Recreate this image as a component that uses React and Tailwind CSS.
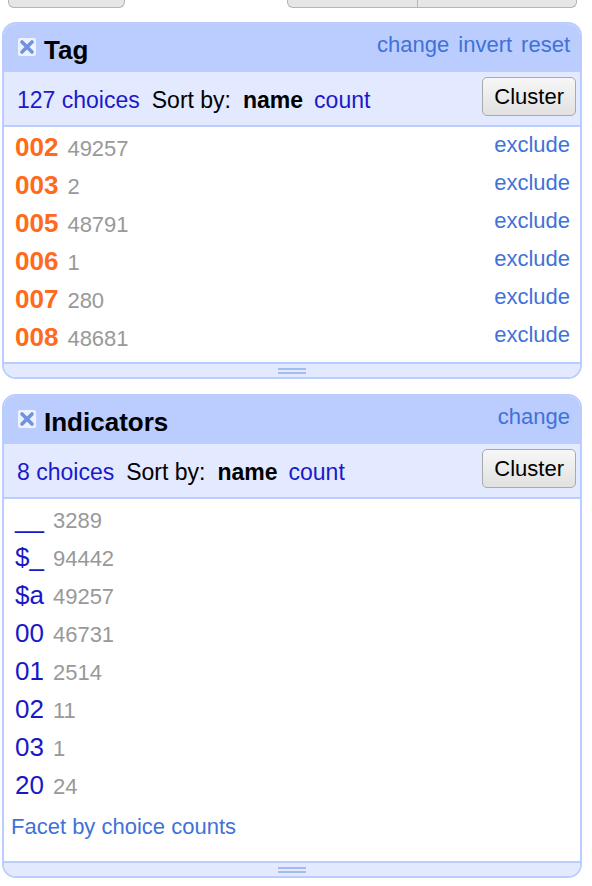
import React from 'react'

const font = "font-['Liberation_Sans',Arial,Helvetica,sans-serif]"

const tagChoices = [
  ['002', '49257'],
  ['003', '2'],
  ['005', '48791'],
  ['006', '1'],
  ['007', '280'],
  ['008', '48681'],
]

const indicatorChoices = [
  ['__', '3289'],
  ['$_', '94442'],
  ['$a', '49257'],
  ['00', '46731'],
  ['01', '2514'],
  ['02', '11'],
  ['03', '1'],
  ['20', '24'],
]

function CloseIcon() {
  return (
    <svg width="20" height="20" viewBox="0 0 20 20" className="shrink-0 mt-[2px]">
      <rect x="1" y="1" width="18" height="18" rx="2" fill="#eef2ff" />
      <path d="M5 5 L15 15 M15 5 L5 15" stroke="#6f93de" strokeWidth="3.6" strokeLinecap="round" />
    </svg>
  )
}

function Grip() {
  return (
    <div className="h-[15px] bg-[#e3e9ff] border-t-2 border-[#bbccff] flex flex-col items-center gap-[2px] pt-[4px]">
      <div className="w-[28px] h-[2px] bg-[#a4bdf0]" />
      <div className="w-[28px] h-[2px] bg-[#a4bdf0]" />
    </div>
  )
}

function FacetHeader({ title, links, count }) {
  return (
    <>
      <div className="h-[48px] bg-[#bbccff] flex justify-between items-start pl-[13px] pr-[10px]">
        <div className="flex items-start gap-[7px] pt-[11px]">
          <CloseIcon />
          <span className="text-[26px] leading-[30px] font-bold text-black">{title}</span>
        </div>
        <div className="flex gap-[9px] pt-[6px] text-[22px] leading-[30px] text-[#3f72d8]">
          {links.map(l => <span key={l}>{l}</span>)}
        </div>
      </div>
      <div className="h-[55px] bg-[#e3e9ff] border-b-2 border-[#bbccff] flex justify-between items-start pl-[13px] pr-[4px]">
        <div className="pt-[13px] text-[23px] leading-[30px] text-black whitespace-pre">
          <span className="text-[#1a1acc]">{count} choices</span>
          <span className="ml-[12px]">Sort by:</span>
          <span className="ml-[12px] font-bold">name</span>
          <span className="ml-[11px] text-[#1a1acc]">count</span>
        </div>
        <button className="mt-[5px] h-[39px] px-[11px] rounded-[5px] border border-[#a9a9a9] bg-gradient-to-b from-[#f7f7f7] to-[#e1e1e1] text-[22px] text-black leading-none">
          Cluster
        </button>
      </div>
    </>
  )
}

export default function App() {
  return (
    <div className={`${font} w-[592px] h-[886px] bg-white overflow-hidden`}>
      <div className="h-[22px] flex items-start">
        <div className="ml-[8px] w-[117px] h-[8px] border border-t-0 border-[#b5b5b5] rounded-b-[6px] bg-[#e6e6e6]" />
        <div className="ml-[162px] flex">
          <div className="w-[131px] h-[8px] border border-t-0 border-[#b5b5b5] rounded-bl-[6px] bg-[#e6e6e6]" />
          <div className="w-[159px] h-[8px] border border-t-0 border-l-0 border-[#b5b5b5] rounded-br-[6px] bg-[#e6e6e6]" />
        </div>
      </div>

      <div className="ml-[2px] w-[580px] border-2 border-[#bbccff] rounded-[14px] overflow-hidden">
        <FacetHeader title="Tag" links={['change', 'invert', 'reset']} count={127} />
        <div className="bg-white pt-[1px] pb-[6px] pl-[11px] pr-[10px]">
          {tagChoices.map(([name, n]) => (
            <div key={name} className="h-[38px] leading-[38px] text-[22px]">
              <span className="float-right leading-[34px] text-[#3f72d8]">exclude</span>
              <span className="text-[26px] font-bold text-[#ff6a1c]">{name}</span>
              <span className="ml-[9px] text-[#999999]">{n}</span>
            </div>
          ))}
        </div>
        <Grip />
      </div>

      <div className="mt-[15px] ml-[2px] w-[580px] border-2 border-[#bbccff] rounded-[14px] overflow-hidden">
        <FacetHeader title="Indicators" links={['change']} count={8} />
        <div className="bg-white pt-[1px] pb-[15px] pl-[11px] pr-[10px]">
          {indicatorChoices.map(([name, n]) => (
            <div key={name} className="h-[38px] leading-[38px] text-[22px]">
              <span className="text-[26px] text-[#1818c8]">{name}</span>
              <span className="ml-[9px] text-[#999999]">{n}</span>
            </div>
          ))}
          <div className="mt-[4px] -ml-[4px] h-[38px] leading-[38px] text-[22px] text-[#3f72d8]">Facet by choice counts</div>
        </div>
        <Grip />
      </div>
    </div>
  )
}
